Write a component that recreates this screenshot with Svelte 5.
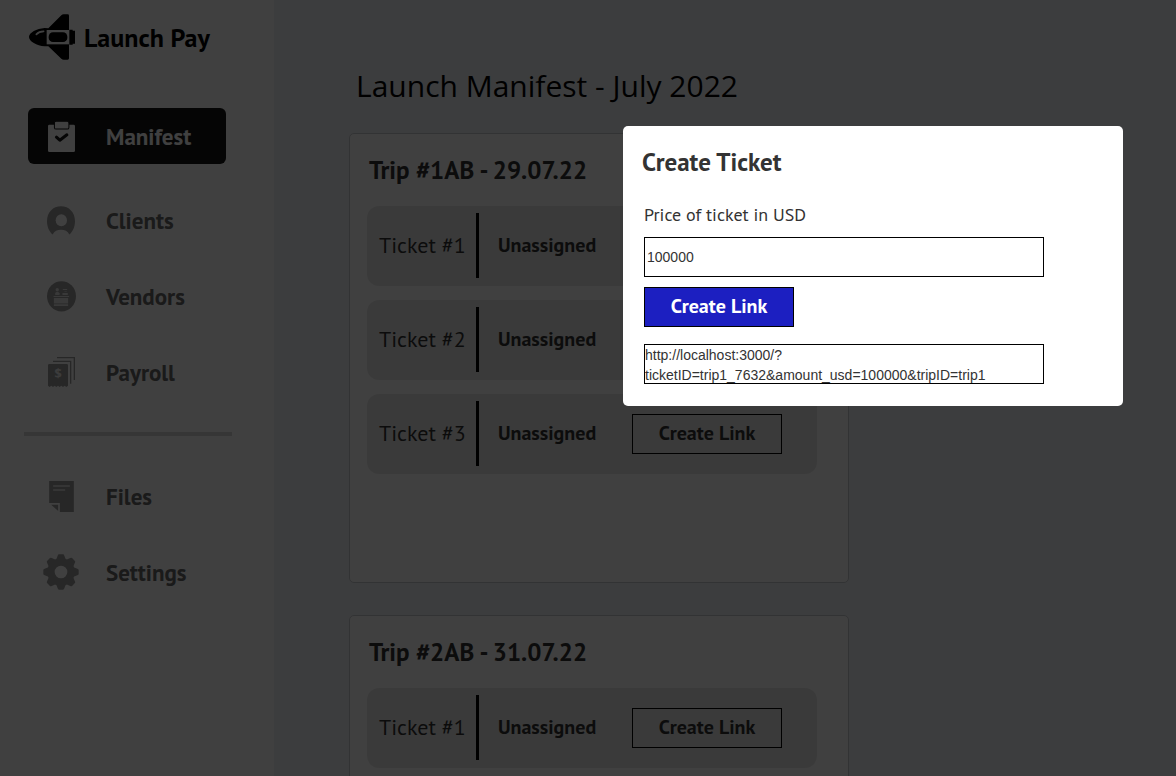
<script lang="ts">
	type Trip = { id: string; title: string; tickets: string[] };

	const trips: Trip[] = [
		{ id: 'trip1', title: 'Trip #1AB - 29.07.22', tickets: ['Ticket #1', 'Ticket #2', 'Ticket #3'] },
		{ id: 'trip2', title: 'Trip #2AB - 31.07.22', tickets: ['Ticket #1'] },
	];

	const mainNav = ['Manifest', 'Clients', 'Vendors', 'Payroll'];
	const otherNav = ['Files', 'Settings'];
	const teeth = [0, 45, 90, 135, 180, 225, 270, 315];

	let active = $state('Manifest');
	let modalOpen = $state(true);
	let tripId = $state('trip1');
	let ticketId = $state('7632');
	let price = $state('100000');
	let link = $state('http://localhost:3000/?ticketID=trip1_7632&amount_usd=100000&tripID=trip1');

	function openModal(id: string) {
		tripId = id;
		ticketId = String(Math.floor(Math.random() * 10000));
		link = '';
		modalOpen = true;
	}

	function createLink() {
		link = `http://localhost:3000/?ticketID=${tripId}_${ticketId}&amount_usd=${price}&tripID=${tripId}`;
	}
</script>

{#snippet icon(name: string)}
	{#if name === 'Manifest'}
		<svg width="27" height="31" viewBox="0 0 80 92" aria-hidden="true">
			<rect y="11" width="80" height="81" rx="4" fill="#fff" />
			<rect x="19" y="1" width="43" height="23" rx="5" fill="#fff" stroke="#141414" stroke-width="3" />
			<path d="M25 48L35 57L56 41" fill="none" stroke="#141414" stroke-width="9" stroke-linecap="round" stroke-linejoin="round" />
		</svg>
	{:else if name === 'Clients'}
		<svg width="28" height="29" viewBox="0 0 84 86" aria-hidden="true">
			<path d="M17 85C7 76 0 62 0 45C0 18 18 0 42 0S84 18 84 45C84 62 77 76 67 85C62 75 53 71 42 71S22 75 17 85Z" fill="#9c9c9c" />
			<ellipse cx="43" cy="42" rx="17" ry="18" fill="#fff" />
		</svg>
	{:else if name === 'Vendors'}
		<svg width="29" height="31" viewBox="0 0 88 93" aria-hidden="true">
			<ellipse cx="44" cy="46" rx="44" ry="46" fill="#9c9c9c" />
			<g fill="#e4e4e4">
				<circle cx="31" cy="26" r="5" />
				<path d="M25 42V37Q26 33 31 33T38 37V42Z" />
				<path d="M48 24H61V27H48ZM53 31H60V33H53ZM47 36H63V42H47ZM20 45H67V48H20ZM21 51H64V68H21ZM21 70H64V75H21Z" />
			</g>
		</svg>
	{:else if name === 'Payroll'}
		<svg width="27" height="30" viewBox="0 0 81 90" aria-hidden="true">
			<path d="M15 13H68V80M27 2H79V69" fill="none" stroke="#9c9c9c" stroke-width="4" />
			<path d="M4 21H56Q60 21 60 25V86L55 90L50 86L45 90L40 86L35 90L30 86L25 90L20 86L15 90L10 86L5 90L0 86V25Q0 21 4 21Z" fill="#9c9c9c" />
			<text x="30" y="63" text-anchor="middle" font-size="38" font-family="Noto Sans, sans-serif" fill="#f0f0f0">$</text>
		</svg>
	{:else if name === 'Files'}
		<svg width="25" height="31" viewBox="0 0 74 93" aria-hidden="true">
			<path d="M0 0H74V93H32V66H0ZM6 71H27V90Z" fill="#9c9c9c" />
			<path d="M12 15H62M12 27H48" stroke="#e4e4e4" stroke-width="5" />
		</svg>
	{:else}
		<svg width="36" height="36" viewBox="0 0 108 108" aria-hidden="true">
			<circle cx="54" cy="54" r="30" fill="none" stroke="#9c9c9c" stroke-width="22" />
			{#each teeth as angle}
				<path d="M38 20L44 5Q45 1 48 1H60Q63 1 64 5L70 20Z" fill="#9c9c9c" transform="rotate({angle} 54 54)" />
			{/each}
		</svg>
	{/if}
{/snippet}

{#snippet navItem(name: string)}
	<li>
		<a href="#{name.toLowerCase()}" class:active={active === name} onclick={() => (active = name)}>
			<span class="icon">{@render icon(name)}</span>
			{name}
		</a>
	</li>
{/snippet}

<div class="page">
	<aside class="sidebar">
		<div class="brand">
			<svg width="48" height="46" viewBox="0 0 144 138" aria-hidden="true">
				<path d="M61 43L100 4Q103 1 107 1H119Q123 1 123 5V133Q123 137 119 137H107Q103 137 100 134L61 97H50C26 95 3 82 3 69S26 44 50 42Z" />
				<rect x="56" y="48" width="68" height="43" fill="#fff" />
				<rect x="62" y="55" width="56" height="29" rx="13" />
				<path d="M124 47H134V50H141V89H134V92H124Z" />
				<path d="M25 61Q33 52 47 52" fill="none" stroke="#fff" stroke-width="5" stroke-linecap="round" />
			</svg>
			<span>Launch Pay</span>
		</div>

		<nav>
			<ul>
				{#each mainNav as name}
					{@render navItem(name)}
				{/each}
			</ul>
			<hr />
			<ul>
				{#each otherNav as name}
					{@render navItem(name)}
				{/each}
			</ul>
		</nav>
	</aside>

	<main>
		<h1>Launch Manifest - July 2022</h1>
		{#each trips as trip}
			<section class="trip">
				<h2>{trip.title}</h2>
				{#each trip.tickets as ticket}
					<div class="ticket">
						<span class="ticket-name">{ticket}</span>
						<span class="status">Unassigned</span>
						<button class="link-btn" onclick={() => openModal(trip.id)}>Create Link</button>
					</div>
				{/each}
			</section>
		{/each}
	</main>
</div>

{#if modalOpen}
	<div class="overlay" role="presentation" onclick={() => (modalOpen = false)}></div>
	<div class="modal" role="dialog" aria-modal="true" aria-labelledby="modal-title">
		<h2 id="modal-title">Create Ticket</h2>
		<div class="form">
			<label for="price">Price of ticket in USD</label>
			<input id="price" type="text" bind:value={price} />
			<button class="link-btn primary" onclick={createLink}>Create Link</button>
			<output for="price">{link}</output>
		</div>
	</div>
{/if}

<style>
	:global(body) {
		margin: 0;
		font-family: 'PT Sans', 'Noto Sans', sans-serif;
		color: #333;
	}
	.page {
		display: flex;
		height: 100vh;
		overflow: hidden;
		background: #f0f2f6;
	}
	.sidebar {
		flex: none;
		box-sizing: border-box;
		width: 274px;
		padding: 14px 42px 0 28px;
		background: #fff;
	}
	.brand {
		display: flex;
		align-items: center;
		gap: 8px;
		height: 46px;
		margin-bottom: 48px;
		color: #000;
		font-size: 26px;
		font-weight: 700;
		white-space: nowrap;
	}
	ul {
		display: flex;
		flex-direction: column;
		gap: 20px;
		margin: 0;
		padding: 0;
		list-style: none;
	}
	nav a {
		display: flex;
		align-items: center;
		gap: 27px;
		box-sizing: border-box;
		width: 198px;
		height: 56px;
		padding-left: 15px;
		border-radius: 6px;
		color: #686868;
		font-size: 23px;
		font-weight: 700;
		text-decoration: none;
	}
	nav a.active {
		margin-bottom: 8px;
		background: #141414;
		color: #fff;
	}
	.icon {
		display: flex;
		justify-content: center;
		width: 36px;
	}
	hr {
		height: 4px;
		margin: 32px 0 32px -4px;
		border: none;
		background: #d8d8d8;
	}
	main {
		flex: 1;
		padding: 64px 75px 0;
	}
	h1 {
		margin: 0 0 25px 7px;
		color: #000;
		font: 400 30px/44px 'Open Sans', 'Noto Sans', sans-serif;
	}
	h2 {
		margin: 0;
		font-size: 25px;
		font-weight: 700;
		line-height: 32px;
	}
	.trip {
		display: flex;
		flex-direction: column;
		gap: 14px;
		box-sizing: border-box;
		max-width: 500px;
		min-height: 450px;
		margin-bottom: 32px;
		padding: 20px 31px 20px 17px;
		border: 1px solid #c8ccd0;
		border-radius: 5px;
		background: #fff;
	}
	.trip h2 {
		margin: 0 0 6px 2px;
	}
	.ticket {
		display: flex;
		align-items: center;
		height: 80px;
		padding: 0 35px 0 12px;
		border-radius: 12px;
		background: #e8e8e8;
	}
	.ticket-name {
		box-sizing: border-box;
		width: 100px;
		margin-bottom: 2px;
		border-right: 3px solid #000;
		font-size: 22px;
		line-height: 65px;
	}
	.status {
		margin: 0 0 2px 19px;
		font-size: 20px;
		font-weight: 700;
	}
	.link-btn {
		width: 150px;
		height: 40px;
		margin-left: auto;
		padding: 0 0 2px;
		border: 1px solid #000;
		background: transparent;
		color: #333;
		font: inherit;
		font-size: 20px;
		font-weight: 700;
		cursor: pointer;
	}
	.link-btn.primary {
		margin: 10px 0 17px;
		background: #1c1fc1;
		color: #fff;
	}
	.overlay {
		position: fixed;
		inset: 0;
		background: rgba(0, 0, 0, 0.75);
	}
	.modal {
		position: fixed;
		top: 126px;
		right: 53px;
		box-sizing: border-box;
		width: 500px;
		padding: 20px 79px 22px 19px;
		border-radius: 5px;
		background: #fff;
	}
	.form {
		display: flex;
		flex-direction: column;
		align-items: flex-start;
		padding: 25px 0 0 2px;
	}
	label {
		margin-bottom: 10px;
		font-size: 18px;
		line-height: 24px;
	}
	input,
	output {
		box-sizing: border-box;
		width: 100%;
		height: 40px;
		border: 1px solid #000;
		color: #333;
		font: 14px/20px 'Liberation Sans', Arial, sans-serif;
	}
	input {
		padding: 0 2px;
		background: #fff;
	}
</style>
